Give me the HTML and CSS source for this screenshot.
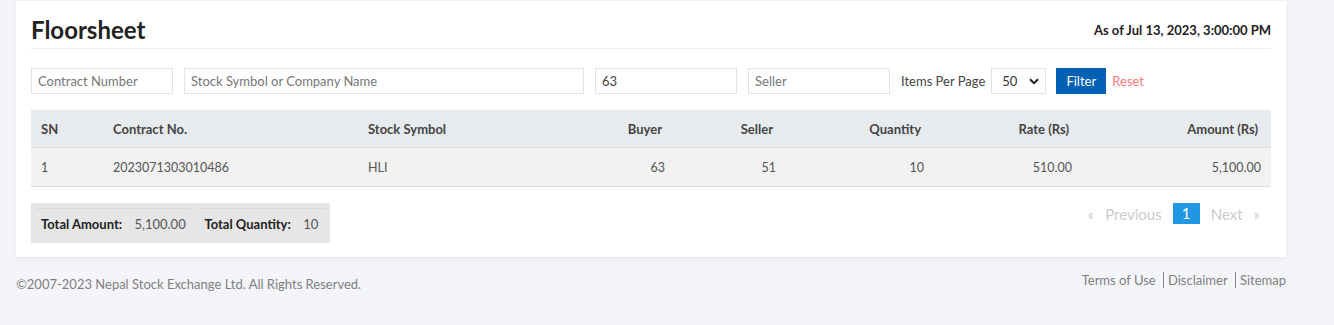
FILE: index.html
```html
<!DOCTYPE html>
<html lang="en">
<head>
    <meta charset="UTF-8">
    <meta name="viewport" content="width=device-width, initial-scale=1.0">
    <title>Floorsheet</title>
    <link rel="stylesheet" href="styles.css">
</head>
<body>
    <div class="page">
        <div class="card">
            <div class="card-header">
                <h1>Floorsheet</h1>
                <div class="as-of">As of Jul 13, 2023, 3:00:00 PM</div>
            </div>

            <form class="filters" onsubmit="return false">
                <input type="text" class="field field-small" placeholder="Contract Number">
                <input type="text" class="field field-wide" placeholder="Stock Symbol or Company Name">
                <input type="text" class="field field-small" placeholder="Buyer" value="63">
                <input type="text" class="field field-small" placeholder="Seller">
                <label class="per-page">Items Per Page</label>
                <div class="select-box">
                    <span>50</span>
                    <svg width="10" height="7" viewBox="0 0 10 7"><path d="M1 1.2 L5 5.2 L9 1.2" fill="none" stroke="#222" stroke-width="2"/></svg>
                </div>
                <button class="filter-button">Filter</button>
                <a class="reset-link" href="#">Reset</a>
            </form>

            <table class="floorsheet">
                <colgroup>
                    <col class="col-sn">
                    <col class="col-contract">
                    <col class="col-symbol">
                    <col class="col-buyer">
                    <col class="col-seller">
                    <col class="col-qty">
                    <col class="col-rate">
                    <col class="col-amount">
                </colgroup>
                <thead>
                    <tr>
                        <th>SN</th>
                        <th>Contract No.</th>
                        <th>Stock Symbol</th>
                        <th class="num">Buyer</th>
                        <th class="num">Seller</th>
                        <th class="num">Quantity</th>
                        <th class="num">Rate (Rs)</th>
                        <th class="num">Amount (Rs)</th>
                    </tr>
                </thead>
                <tbody>
                    <tr>
                        <td>1</td>
                        <td>2023071303010486</td>
                        <td>HLI</td>
                        <td class="num">63</td>
                        <td class="num">51</td>
                        <td class="num">10</td>
                        <td class="num">510.00</td>
                        <td class="num">5,100.00</td>
                    </tr>
                </tbody>
            </table>

            <div class="table-footer">
                <div class="totals">
                    <div class="total-item item-amount"><b>Total Amount:</b> <span>5,100.00</span></div>
                    <div class="total-item item-qty"><b>Total Quantity:</b> <span>10</span></div>
                </div>
                <ul class="pagination">
                    <li class="disabled">&laquo;</li>
                    <li class="disabled">Previous</li>
                    <li class="current">1</li>
                    <li class="disabled">Next</li>
                    <li class="disabled">&raquo;</li>
                </ul>
            </div>
        </div>

        <footer class="site-footer">
            <div class="copyright">&copy;2007-2023 Nepal Stock Exchange Ltd. All Rights Reserved.</div>
            <div class="footer-links">
                <a href="#">Terms of Use</a>
                <a href="#">Disclaimer</a>
                <a href="#">Sitemap</a>
            </div>
        </footer>
    </div>
</body>
</html>
```

FILE: styles.css
```css
body {
    margin: 0;
    background-color: #f4f5f9;
    font-family: Lato, "Open Sans", sans-serif;
    font-size: 13px;
    color: #555;
}

.page {
    width: 1270px;
    padding-left: 16px;
}

.card {
    margin-top: 1px;
    background-color: #ffffff;
    padding: 0 15px 14px 15px;
    box-shadow: 0 2px 6px rgba(0, 0, 0, 0.06);
}

.card-header {
    display: flex;
    justify-content: space-between;
    align-items: center;
    height: 47px;
    border-bottom: 1px solid #eeeeee;
}

.card-header h1 {
    margin: 0;
    padding-top: 10px;
    font-size: 24px;
    font-weight: 700;
    color: #222;
}

.as-of {
    padding-top: 10px;
    font-size: 13px;
    font-weight: 700;
    color: #222;
}

.filters {
    display: flex;
    align-items: center;
    margin-top: 19px;
}

.field {
    box-sizing: border-box;
    height: 26px;
    margin: 0 11px 0 0;
    padding: 0 6px;
    border: 1px solid #e2e2e2;
    font-family: inherit;
    font-size: 13px;
    color: #444;
    outline: none;
}

.field::placeholder {
    color: #777;
}

.field-small {
    width: 142px;
}

.field-wide {
    width: 400px;
}

.per-page {
    margin-right: 6px;
    font-size: 13px;
    color: #444;
}

.select-box {
    box-sizing: border-box;
    display: flex;
    justify-content: space-between;
    align-items: center;
    width: 55px;
    height: 26px;
    padding: 0 6px 0 10px;
    border: 1px solid #e2e2e2;
    font-size: 13px;
    color: #333;
    margin-right: 10px;
}

.filter-button {
    height: 26px;
    width: 50px;
    padding: 0;
    border: none;
    background-color: #0061b4;
    color: #fff;
    font-family: inherit;
    font-size: 13px;
    cursor: pointer;
}

.reset-link {
    margin-left: 6px;
    color: #f77b7b;
    text-decoration: none;
    font-size: 13px;
}

.floorsheet {
    width: 100%;
    margin-top: 16px;
    border-collapse: collapse;
    table-layout: fixed;
}

.col-sn { width: 72px; }
.col-contract { width: 255px; }
.col-symbol { width: 207px; }
.col-buyer { width: 110px; }
.col-seller { width: 111px; }
.col-qty { width: 148px; }
.col-rate { width: 148px; }
.col-amount { width: 189px; }

.floorsheet th {
    height: 37px;
    padding: 0 10px;
    background-color: #e8ebee;
    border-bottom: 1px solid #dcdfe3;
    text-align: left;
    font-weight: 700;
    font-size: 13px;
    color: #444;
}

.floorsheet td {
    height: 38px;
    padding: 0 10px;
    background-color: #f2f2f2;
    border-bottom: 1px solid #dedede;
    font-size: 12.5px;
    color: #555;
}

.floorsheet th.num {
    text-align: right;
    padding-right: 13px;
}

.floorsheet td.num {
    text-align: right;
}

.table-footer {
    display: flex;
    justify-content: space-between;
    align-items: flex-start;
    margin-top: 16px;
}

.totals {
    display: flex;
    gap: 8px;
    width: 289px;
    padding: 5px;
    background-color: #e6e6e6;
}

.total-item {
    padding: 7px 5px 6px 5px;
    border-top: 1px solid #dadada;
    color: #555;
    white-space: nowrap;
}

.item-amount { width: 146px; }
.item-qty { width: 116px; }

.total-item b {
    color: #222;
    margin-right: 9px;
}

.pagination {
    display: flex;
    align-items: center;
    margin: 0 11px 0 0;
    padding: 0;
    list-style: none;
    font-size: 15px;
}

.pagination li {
    margin-left: 11px;
}

.pagination .disabled {
    color: #cccccc;
}

.pagination .current {
    width: 27px;
    height: 21px;
    line-height: 21px;
    text-align: center;
    background-color: #2196e3;
    color: #fff;
}

.site-footer {
    display: flex;
    justify-content: space-between;
    align-items: flex-start;
    padding-top: 15px;
    font-size: 13px;
    color: #808080;
}

.copyright {
    padding-top: 4px;
}

.footer-links a {
    color: #808080;
    text-decoration: none;
    padding: 0 4px;
    border-left: 1px solid #888;
}

.footer-links a:first-child {
    border-left: none;
}

.footer-links a:last-child {
    padding-right: 0;
}
```
